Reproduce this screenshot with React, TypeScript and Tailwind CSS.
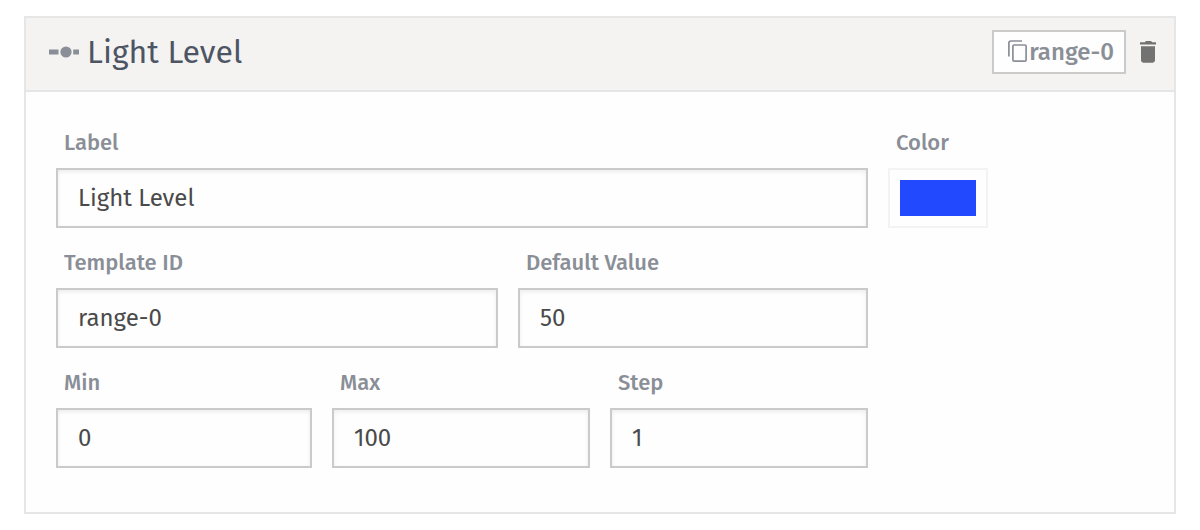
import { useState, type InputHTMLAttributes } from "react";

function RangeIcon() {
  return (
    <svg width="30" height="12" viewBox="0 0 30 12" fill="#8a8e97" aria-hidden="true">
      <rect x="0" y="3.5" width="9.5" height="5" />
      <circle cx="17" cy="6" r="5.6" />
      <rect x="24.2" y="3.5" width="5.8" height="5" />
    </svg>
  );
}

function CopyIcon() {
  return (
    <svg width="20" height="24" viewBox="0 0 20 24" fill="none" stroke="#8a8e97" strokeWidth="1.7" aria-hidden="true">
      <path d="M14 1H2.9a2 2 0 0 0-2 2V16.5" />
      <rect x="4.9" y="5" width="13.2" height="16.2" rx="1.2" />
    </svg>
  );
}

function TrashIcon() {
  return (
    <svg width="16" height="22" viewBox="0 0 16 22" fill="#727272" aria-hidden="true">
      <path d="M0 1.2h4.8L6 0h5l1.2 1.2H16V3.5H0z" />
      <path d="M1 5.3h14v14a2.4 2.4 0 0 1-2.4 2.4H3.4A2.4 2.4 0 0 1 1 19.3z" />
    </svg>
  );
}

type FieldProps = InputHTMLAttributes<HTMLInputElement> & { id: string; label: string };

function Field({ id, label, ...rest }: FieldProps) {
  return (
    <div className="flex min-w-0 flex-col gap-1.5">
      <label htmlFor={id} className="pl-2 text-[22px] leading-[38px] font-medium text-[#8a8e97]">
        {label}
      </label>
      <input
        id={id}
        className="h-15 w-full border-2 border-[#cacaca] bg-[#fefefe] px-5 text-2xl text-[#4a4a4a] shadow-[inset_0_2px_4px_rgba(10,10,10,0.07)] outline-none focus:border-[#8a8e97]"
        {...rest}
      />
    </div>
  );
}

export default function App() {
  const [color, setColor] = useState("#2349ff");

  return (
    <main className="px-6 py-4 font-['Fira_Sans','Noto_Sans',sans-serif]">
      <section className="border-2 border-[#e6e6e6] bg-[#fefefe]">
        <header className="flex items-center justify-between border-b-2 border-[#e6e6e6] bg-[#f4f3f2] pt-3 pr-[18px] pb-4 pl-[23px]">
          <div className="flex items-center gap-2">
            <RangeIcon />
            <h2 className="text-[32px] leading-9 text-[#4d5564]">Light Level</h2>
          </div>
          <div className="flex items-center gap-3.5">
            <button
              type="button"
              className="flex h-11 items-center gap-px border-2 border-[#cacaca] bg-[#fefefe] pr-2.5 pl-3.5 text-2xl font-medium text-[#8a8e97]"
            >
              <CopyIcon />
              range-0
            </button>
            <button type="button" aria-label="Delete">
              <TrashIcon />
            </button>
          </div>
        </header>

        <form className="grid grid-cols-[812fr_256fr] gap-5 px-[30px] pt-8 pb-11">
          <div className="flex flex-col gap-4">
            <Field id="label" label="Label" defaultValue="Light Level" />
            <div className="grid grid-cols-[442fr_350fr] gap-5">
              <Field id="template-id" label="Template ID" defaultValue="range-0" />
              <Field id="default-value" label="Default Value" inputMode="numeric" defaultValue="50" />
            </div>
            <div className="grid grid-cols-[256fr_258fr_258fr] gap-5">
              <Field id="min" label="Min" inputMode="numeric" defaultValue="0" />
              <Field id="max" label="Max" inputMode="numeric" defaultValue="100" />
              <Field id="step" label="Step" inputMode="numeric" defaultValue="1" />
            </div>
          </div>
          <div className="flex flex-col items-start gap-1.5">
            <label htmlFor="color" className="pl-2 text-[22px] leading-[38px] font-medium text-[#8a8e97]">
              Color
            </label>
            <input
              id="color"
              type="color"
              value={color}
              onChange={(event) => setColor(event.target.value)}
              className="h-15 w-25 cursor-pointer appearance-none border-2 border-[#f3f3f3] bg-[#fefefe] p-2.5 [&::-webkit-color-swatch]:border-0 [&::-webkit-color-swatch-wrapper]:p-0"
            />
          </div>
        </form>
      </section>
    </main>
  );
}
